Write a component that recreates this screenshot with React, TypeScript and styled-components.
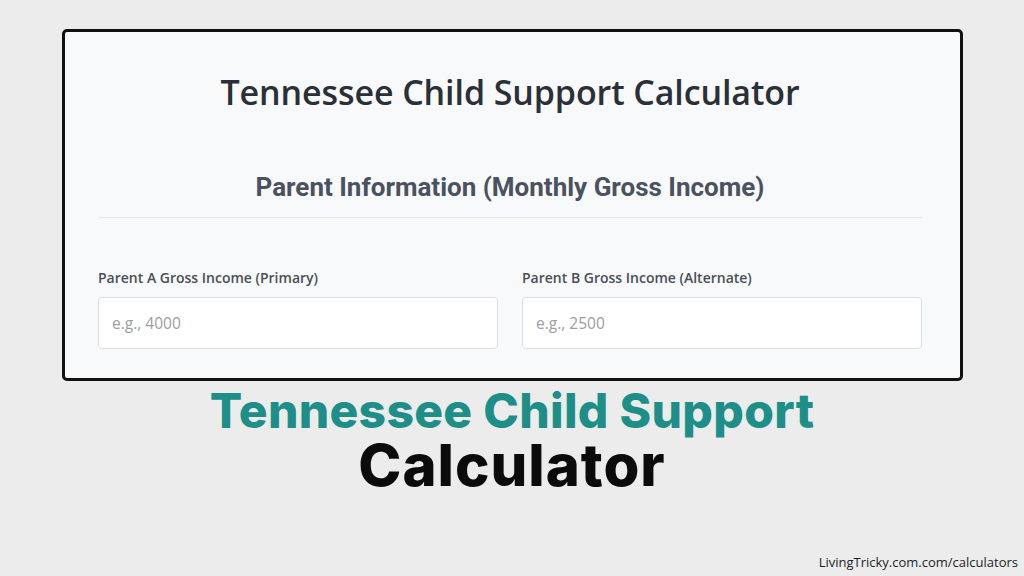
import React from 'react'
import styled, { createGlobalStyle } from 'styled-components'

const GlobalStyle = createGlobalStyle`
  html, body {
    margin: 0;
    padding: 0;
    background: #ececec;
  }
  body {
    font-family: 'Open Sans', 'Liberation Sans', sans-serif;
  }
`

type Parent = {
  key: string
  label: string
  placeholder: string
}

const parents: Parent[] = [
  { key: 'a', label: 'Parent A Gross Income (Primary)', placeholder: 'e.g., 4000' },
  { key: 'b', label: 'Parent B Gross Income (Alternate)', placeholder: 'e.g., 2500' },
]

export default function App() {
  return (
    <>
      <GlobalStyle />
      <Page>
        <Card>
          <Title>Tennessee Child Support Calculator</Title>
          <Section>
            <SectionTitle>Parent Information (Monthly Gross Income)</SectionTitle>
          </Section>
          <FieldGrid>
            {parents.map(p => (
              <Field key={p.key}>
                <Label htmlFor={`income-${p.key}`}>{p.label}</Label>
                <Input id={`income-${p.key}`} type="number" placeholder={p.placeholder} />
              </Field>
            ))}
          </FieldGrid>
        </Card>
        <Banner>
          <BannerLine>Tennessee Child Support</BannerLine>
          <BannerLine $dark>Calculator</BannerLine>
        </Banner>
        <Footer>LivingTricky.com.com/calculators</Footer>
      </Page>
    </>
  )
}

const Page = styled.div`
  width: 1024px;
  height: 576px;
  box-sizing: border-box;
  padding-top: 29px;
  display: flex;
  flex-direction: column;
  align-items: center;
  overflow: hidden;
`

const Card = styled.div`
  width: 901px;
  height: 352px;
  flex-shrink: 0;
  box-sizing: border-box;
  margin-left: 1px;
  border: 3px solid #111;
  border-radius: 5px;
  background: #f7f9fa;
  padding: 39px 38px 0 33px;
  display: flex;
  flex-direction: column;
`

const Title = styled.h1`
  margin: 0;
  font-family: 'Open Sans', sans-serif;
  font-weight: 600;
  font-size: 34px;
  line-height: 42px;
  color: #2b2f36;
  text-align: center;
  letter-spacing: -0.1px;
`

const Section = styled.div`
  margin-top: 58px;
  padding-bottom: 14px;
  border-bottom: 1px solid #e3e6ea;
`

const SectionTitle = styled.h2`
  margin: 0;
  font-family: 'Roboto', sans-serif;
  font-weight: 700;
  font-size: 26px;
  line-height: 32px;
  color: #4a5260;
  text-align: center;
`

const FieldGrid = styled.div`
  display: grid;
  grid-template-columns: 1fr 1fr;
  gap: 24px;
  margin-top: 51px;
`

const Field = styled.div`
  display: flex;
  flex-direction: column;
`

const Label = styled.label`
  font-family: 'Open Sans', sans-serif;
  font-weight: 600;
  font-size: 14px;
  line-height: 18px;
  color: #4a4f57;
  margin-bottom: 10px;
`

const Input = styled.input`
  height: 52px;
  box-sizing: border-box;
  border: 1px solid #dcdfe3;
  border-radius: 4px;
  background: #fff;
  padding: 0 13px;
  font-family: 'Open Sans', sans-serif;
  font-size: 15.5px;
  color: #333;
  outline: none;
  &::placeholder {
    color: #9a9da2;
  }
  &::-webkit-inner-spin-button,
  &::-webkit-outer-spin-button {
    -webkit-appearance: none;
    margin: 0;
  }
`

const Banner = styled.div`
  margin-top: 4px;
  display: flex;
  flex-direction: column;
  align-items: center;
`

const BannerLine = styled.div<{ $dark?: boolean }>`
  font-family: 'Inter', sans-serif;
  font-weight: 800;
  font-size: ${p => (p.$dark ? '58px' : '48px')};
  line-height: ${p => (p.$dark ? '56px' : '52px')};
  letter-spacing: ${p => (p.$dark ? '1px' : '0.3px')};
  color: ${p => (p.$dark ? '#0b0b0b' : '#1e8f88')};
`

const Footer = styled.div`
  align-self: flex-end;
  margin-top: auto;
  margin-right: 6px;
  margin-bottom: 5px;
  font-family: 'Open Sans', sans-serif;
  font-size: 13px;
  color: #1e1e1e;
`
